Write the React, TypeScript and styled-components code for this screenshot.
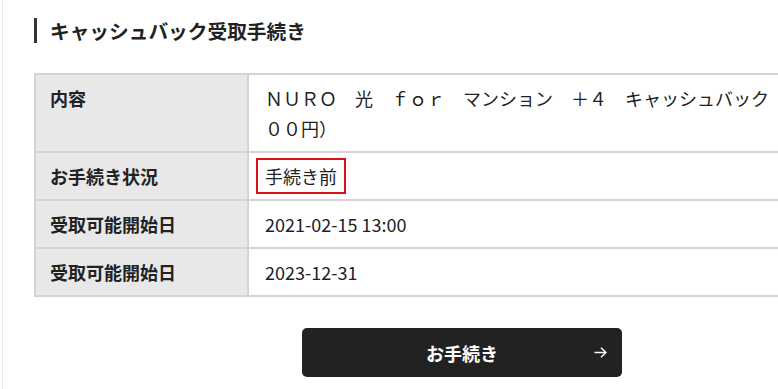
import React from 'react';
import styled, { createGlobalStyle } from 'styled-components';

const GlobalStyle = createGlobalStyle`
    html, body {
        margin: 0;
        padding: 0;
        overflow: hidden;
        background: #fff;
    }
    body {
        font-family: 'Noto Sans CJK JP', 'Noto Sans', sans-serif;
        color: #222;
    }
`;

const Page = styled.div`
    margin-left: 2px;
    border-left: 1px solid #e6e6e6;
    min-height: 389px;
    padding: 18px 0 0 31px;
    box-sizing: border-box;
`;

const Section = styled.section`
    width: 856px;
`;

const Heading = styled.h2`
    margin: 0 0 30px;
    border-left: 3px solid #333;
    padding-left: 13px;
    height: 25px;
    line-height: 25px;
    font-size: 19.7px;
    font-weight: 700;
    color: #222;
`;

const Table = styled.table`
    width: 100%;
    border-spacing: 0;
    border-top: 2px solid #d4d4d4;
    border-left: 2px solid #d4d4d4;
    font-size: 18px;
    line-height: 30px;
`;

const Label = styled.th`
    width: 181px;
    padding: 8px 16px 8px 14px;
    background: #e8e8e8;
    border-right: 2px solid #d4d4d4;
    border-bottom: 2px solid #d4d4d4;
    text-align: left;
    vertical-align: top;
    font-weight: 700;
    color: #222;
`;

const Value = styled.td<{ $nowrap?: boolean }>`
    padding: 8px 16px;
    border-right: 2px solid #d4d4d4;
    border-bottom: 2px solid #d4d4d4;
    vertical-align: top;
    color: #222;
    white-space: ${props => (props.$nowrap ? 'nowrap' : 'normal')};
`;

const Status = styled.span`
    margin-left: -9px;
    padding: 3px 7px;
    border: 2px solid #d7101a;
`;

const Actions = styled.div`
    display: flex;
    justify-content: center;
    margin-top: 31px;
`;

const ActionButton = styled.button`
    display: grid;
    grid-template-columns: 1fr auto 1fr;
    align-items: center;
    width: 320px;
    height: 49px;
    padding: 0 15px;
    border: none;
    border-radius: 5px;
    background: #222;
    color: #fff;
    font-family: 'Noto Sans CJK JP', 'Noto Sans', sans-serif;
    font-size: 18px;
    font-weight: 700;
    cursor: pointer;
`;

const ButtonLabel = styled.span`
    grid-column: 2;
`;

const ArrowIcon = styled.svg`
    grid-column: 3;
    justify-self: end;
    width: 13px;
    height: 11px;
`;

const rows: { label: string; value: string }[] = [
    { label: '受取可能開始日', value: '2021-02-15 13:00' },
    { label: '受取可能開始日', value: '2023-12-31' },
];

const App: React.FC = () => {
    return (
        <>
            <GlobalStyle />
            <Page>
                <Section>
                    <Heading>キャッシュバック受取手続き</Heading>
                    <Table>
                        <tbody>
                            <tr>
                                <Label>内容</Label>
                                <Value $nowrap>
                                    ＮＵＲＯ　光　ｆｏｒ　マンション　＋４　キャッシュバック（３０，０
                                    <br />
                                    ００円）
                                </Value>
                            </tr>
                            <tr>
                                <Label>お手続き状況</Label>
                                <Value>
                                    <Status>手続き前</Status>
                                </Value>
                            </tr>
                            {rows.map((r, i) => (
                                <tr key={i}>
                                    <Label>{r.label}</Label>
                                    <Value>{r.value}</Value>
                                </tr>
                            ))}
                        </tbody>
                    </Table>
                    <Actions>
                        <ActionButton>
                            <ButtonLabel>お手続き</ButtonLabel>
                            <ArrowIcon viewBox='0 0 13 11' fill='none'>
                                <path
                                    d='M0.5 5.5H12M7 0.8L12 5.5L7 10.2'
                                    stroke='#fff'
                                    strokeWidth='1.4'
                                />
                            </ArrowIcon>
                        </ActionButton>
                    </Actions>
                </Section>
            </Page>
        </>
    );
};

export default App;
